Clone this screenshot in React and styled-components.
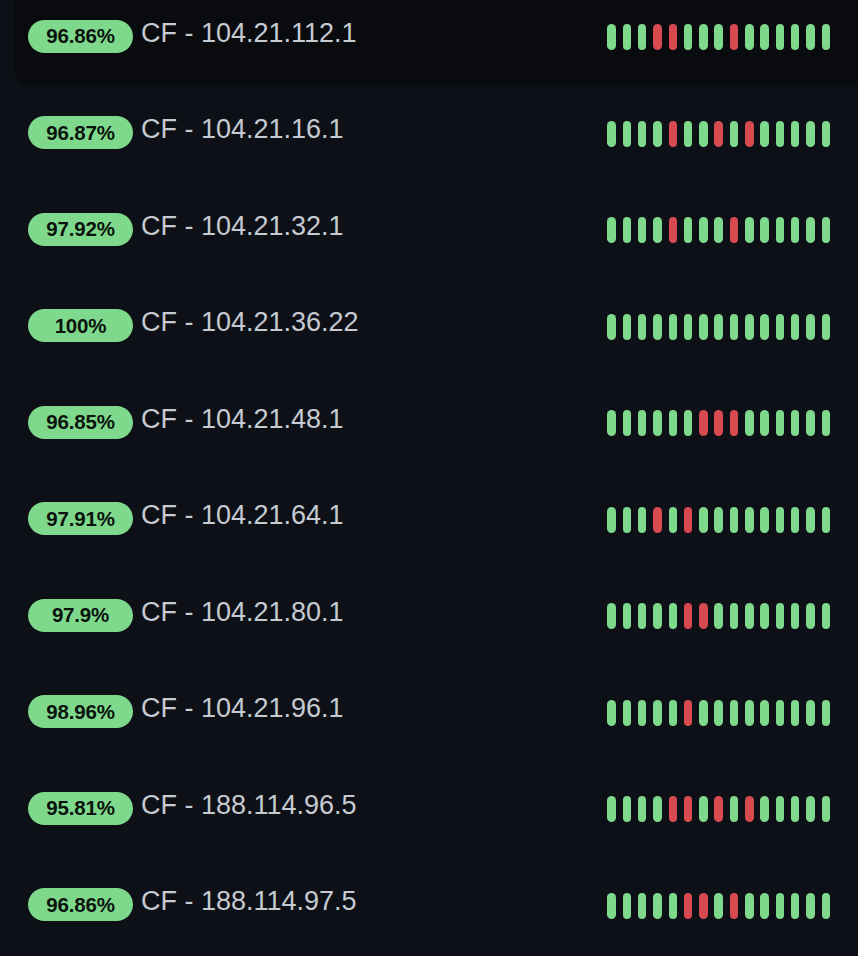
import React from "react";
import styled, { createGlobalStyle } from "styled-components";

const Global = createGlobalStyle`
  html, body {
    margin: 0;
    padding: 0;
    background: #0d1117;
    overflow: hidden;
  }
  body {
    font-family: "Liberation Sans", Arial, Helvetica, sans-serif;
  }
`;

const List = styled.div`
  display: flex;
  flex-direction: column;
  margin-top: -12px;
  margin-right: -20px;
  padding-left: 15px;
`;

const Row = styled.div`
  display: flex;
  align-items: center;
  height: 96.5px;
  box-sizing: border-box;
  padding: 0 48px 0 13px;
  border-radius: 12px;
  background: ${(p) => (p.$active ? "#090b0f" : "transparent")};
`;

const Badge = styled.span`
  flex: none;
  display: flex;
  align-items: center;
  justify-content: center;
  width: 105px;
  height: 33px;
  border-radius: 17px;
  background: #7fd98c;
  color: #0b130d;
  font-weight: 700;
  font-size: 20.5px;
  letter-spacing: -0.2px;
`;

const Name = styled.span`
  margin-left: 8px;
  padding-bottom: 6px;
  color: #c6cad1;
  font-size: 27px;
  white-space: nowrap;
`;

const Bars = styled.div`
  margin-left: auto;
  display: flex;
  gap: 6.8px;
  padding-top: 2px;
`;

const Bar = styled.span`
  width: 8.5px;
  height: 26px;
  border-radius: 999px;
  background: ${(p) => (p.$down ? "#d64a50" : "#7fd98c")};
`;

const rows = [
  { pct: "96.86%", name: "CF - 104.21.112.1", red: [4, 5, 9] },
  { pct: "96.87%", name: "CF - 104.21.16.1", red: [5, 8, 10] },
  { pct: "97.92%", name: "CF - 104.21.32.1", red: [5, 9] },
  { pct: "100%", name: "CF - 104.21.36.22", red: [] },
  { pct: "96.85%", name: "CF - 104.21.48.1", red: [7, 8, 9] },
  { pct: "97.91%", name: "CF - 104.21.64.1", red: [4, 6] },
  { pct: "97.9%", name: "CF - 104.21.80.1", red: [6, 7] },
  { pct: "98.96%", name: "CF - 104.21.96.1", red: [6] },
  { pct: "95.81%", name: "CF - 188.114.96.5", red: [5, 6, 8, 10] },
  { pct: "96.86%", name: "CF - 188.114.97.5", red: [6, 7, 9] },
];

export default function App() {
  return (
    <>
      <Global />
      <List>
        {rows.map((r, i) => (
          <Row key={i} $active={i === 0}>
            <Badge>{r.pct}</Badge>
            <Name>{r.name}</Name>
            <Bars>
              {Array.from({ length: 15 }, (_, j) => (
                <Bar key={j} $down={r.red.includes(j + 1)} />
              ))}
            </Bars>
          </Row>
        ))}
      </List>
    </>
  );
}
